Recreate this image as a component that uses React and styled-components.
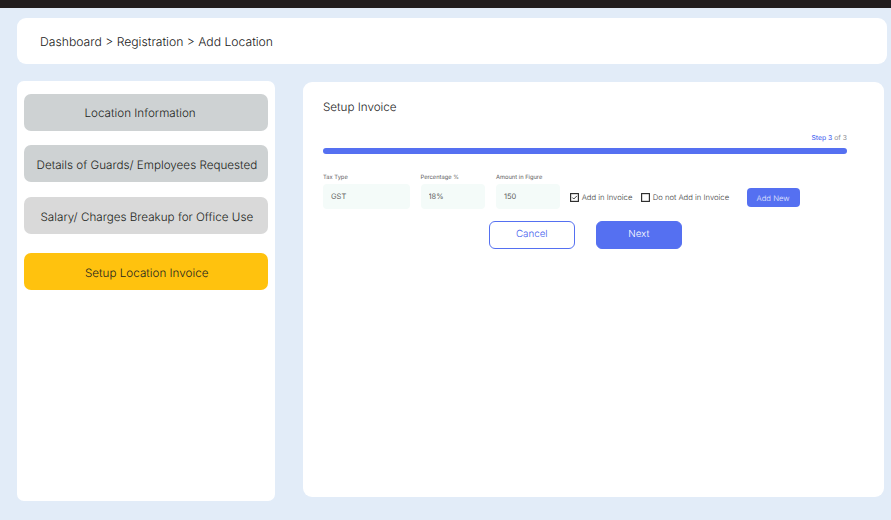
import React from "react";
import styled, { createGlobalStyle } from "styled-components";

const GlobalStyle = createGlobalStyle`
  *, *::before, *::after { box-sizing: border-box; }
  body {
    margin: 0;
    background: #e2ecf8;
    font-family: Inter, "Liberation Sans", sans-serif;
    text-rendering: geometricPrecision;
  }
  button, input { font-family: inherit; text-rendering: inherit; }
  button { cursor: pointer; }
`;

const Page = styled.div`
  height: 520px;
  overflow: hidden;
  background: #e2ecf8;
  border-top: 8px solid #221e1f;
  padding: 10.4px 4.4px 0 16.5px;
`;

const Header = styled.header`
  height: 45.6px;
  border-radius: 9px;
  background: #fff;
  display: flex;
  align-items: center;
  padding: 1px 23.5px 0;
  font-size: 12.2px;
  font-weight: 300;
  color: #181818;
  white-space: pre;
`;

const Columns = styled.div`
  display: flex;
  align-items: flex-start;
  gap: 28px;
  margin-top: 17.4px;
`;

const Sidebar = styled.nav`
  width: 258.5px;
  height: 420px;
  border-radius: 7px;
  background: #fff;
  padding: 12.2px 7.5px;
  display: flex;
  flex-direction: column;
`;

const StepButton = styled.button`
  height: 37.3px;
  flex: none;
  margin: 0 0 ${(p) => p.$gap || 14.3}px;
  border: 0;
  border-radius: 7px;
  background: ${(p) => p.$color};
  color: #1c1e20;
  font-size: 11.67px;
  font-weight: 300;
  padding: 2.4px 0 0 ${(p) => p.$indent}px;
  text-align: left;
  white-space: nowrap;
`;

const Panel = styled.main`
  width: 581px;
  height: 414.7px;
  margin-top: 0.6px;
  border-radius: 9px;
  background: #fff;
  padding: 17px 37px 0 20px;
`;

const Title = styled.h1`
  margin: 0;
  font-size: 11.65px;
  font-weight: 300;
  line-height: 16px;
  color: #222;
`;

const StepCount = styled.div`
  margin-top: 17px;
  text-align: right;
  font-size: 6.8px;
  line-height: 12px;
  color: #8e8e93;
  b { color: #5570f1; font-weight: 500; }
`;

const Progress = styled.div`
  height: 6px;
  margin-top: 4px;
  border-radius: 3px;
  background: #5570f1;
`;

const FormRow = styled.div`
  display: flex;
  width: 476.6px;
  height: 37px;
  margin-top: 19.4px;
`;

const Field = styled.label`
  width: ${(p) => p.$width}px;
  margin-right: ${(p) => p.$gap || 11}px;
  padding-top: 0.5px;
  font-size: 5.75px;
  line-height: 8px;
  color: #5c5c5c;
  white-space: nowrap;
`;

const Input = styled.input`
  display: block;
  width: 100%;
  height: 25px;
  margin-top: 2.5px;
  border: 0;
  border-radius: 4px;
  background: #f4fbf9;
  padding: 0 8px;
  font-size: 7.5px;
  color: #606060;
  outline: 0;
`;

const Option = styled.label`
  display: flex;
  align-items: center;
  gap: 2.7px;
  height: 10px;
  margin: 19px 8.6px 0 0;
  font-size: 7.7px;
  font-weight: 300;
  color: #3c3c3c;
  white-space: nowrap;
  svg { display: block; flex: none; }
`;

const AddButton = styled.button`
  width: 53px;
  height: 19px;
  margin: 14.8px 0 0 auto;
  padding: 1px 0 0;
  border: 0;
  border-radius: 4px;
  background: #5570f1;
  color: #e4e9fd;
  font-size: 7.7px;
  font-weight: 300;
`;

const Actions = styled.div`
  display: flex;
  gap: 21px;
  margin: 10.2px 0 0 165.8px;
`;

const ActionButton = styled.button`
  width: 86px;
  height: 28px;
  padding: 0;
  border: 1px solid #5570f1;
  border-radius: 6px;
  background: ${(p) => (p.$filled ? "#5570f1" : "#fff")};
  color: ${(p) => (p.$filled ? "#fff" : "#4460ee")};
  font-size: 9.8px;
  font-weight: 300;
`;

const CheckIcon = ({ checked }) => (
  <svg width="9" height="9" viewBox="0 0 9 9" fill="none" stroke="#2c2c2c">
    <rect x="0.6" y="0.6" width="7.8" height="7.8" strokeWidth="1.15" />
    {checked && <path d="M2.3 4.5 3.8 6 6.9 2.9" strokeWidth="0.9" />}
  </svg>
);

export default function App() {
  return (
    <>
      <GlobalStyle />
      <Page>
        <Header>Dashboard &gt; Registration &gt; Add Location</Header>
        <Columns>
          <Sidebar>
            <StepButton $color="#ced2d3" $indent={60.5}>Location Information</StepButton>
            <StepButton $color="#ced2d3" $indent={12.5}>Details of Guards/ Employees Requested</StepButton>
            <StepButton $color="#d9d9d9" $indent={16.5} $gap={19}>Salary/ Charges Breakup for Office Use</StepButton>
            <StepButton $color="#ffc20e" $indent={61}>Setup Location Invoice</StepButton>
          </Sidebar>
          <Panel>
            <Title>Setup Invoice</Title>
            <StepCount><b>Step 3</b> of 3</StepCount>
            <Progress />
            <FormRow>
              <Field $width={86.5}>Tax Type<Input defaultValue="GST" /></Field>
              <Field $width={64.5}>Percentage %<Input defaultValue="18%" /></Field>
              <Field $width={64.2} $gap={9.8}>Amount in Figure<Input defaultValue="150" /></Field>
              <Option><CheckIcon checked />Add in Invoice</Option>
              <Option><CheckIcon />Do not Add in Invoice</Option>
              <AddButton>Add New</AddButton>
            </FormRow>
            <Actions>
              <ActionButton>Cancel</ActionButton>
              <ActionButton $filled>Next</ActionButton>
            </Actions>
          </Panel>
        </Columns>
      </Page>
    </>
  );
}
